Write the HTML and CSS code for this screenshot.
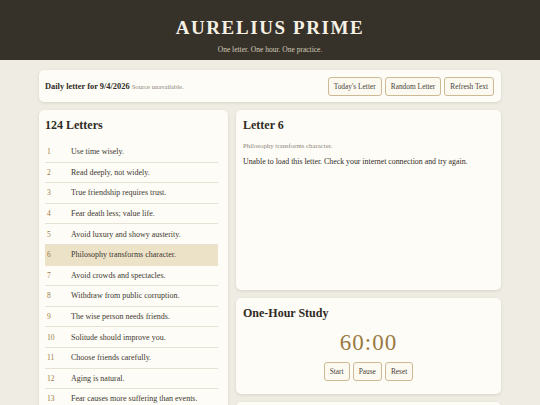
FILE: index.html
```html
<!DOCTYPE html>
<html lang="en">
<head>
<meta charset="utf-8">
<title>Aurelius Prime</title>
<link rel="stylesheet" href="styles.css">
</head>
<body>
<header class="site-header">
  <h1 class="brand">AURELIUS PRIME</h1>
  <p class="tagline">One letter. One hour. One practice.</p>
</header>
<main class="container">
  <section class="card toolbar">
    <div class="daily"><strong>Daily letter for 9/4/2026</strong> <span class="muted">Source unavailable.</span></div>
    <div class="actions">
      <button class="btn">Today's Letter</button>
      <button class="btn">Random Letter</button>
      <button class="btn">Refresh Text</button>
    </div>
  </section>
  <div class="layout">
    <aside class="card letters">
      <h2 class="card-title">124 Letters</h2>
      <ol class="letter-list">
        <li class="row"><span class="num">1</span><span class="summary">Use time wisely.</span></li>
        <li class="row"><span class="num">2</span><span class="summary">Read deeply, not widely.</span></li>
        <li class="row"><span class="num">3</span><span class="summary">True friendship requires trust.</span></li>
        <li class="row"><span class="num">4</span><span class="summary">Fear death less; value life.</span></li>
        <li class="row"><span class="num">5</span><span class="summary">Avoid luxury and showy austerity.</span></li>
        <li class="row active"><span class="num">6</span><span class="summary">Philosophy transforms character.</span></li>
        <li class="row"><span class="num">7</span><span class="summary">Avoid crowds and spectacles.</span></li>
        <li class="row"><span class="num">8</span><span class="summary">Withdraw from public corruption.</span></li>
        <li class="row"><span class="num">9</span><span class="summary">The wise person needs friends.</span></li>
        <li class="row"><span class="num">10</span><span class="summary">Solitude should improve you.</span></li>
        <li class="row"><span class="num">11</span><span class="summary">Choose friends carefully.</span></li>
        <li class="row"><span class="num">12</span><span class="summary">Aging is natural.</span></li>
        <li class="row"><span class="num">13</span><span class="summary">Fear causes more suffering than events.</span></li>
      </ol>
    </aside>
    <div class="main-col">
      <article class="card letter">
        <h2 class="card-title">Letter 6</h2>
        <p class="subtitle">Philosophy transforms character.</p>
        <p class="body">Unable to load this letter. Check your internet connection and try again.</p>
      </article>
      <section class="card study">
        <h2 class="card-title">One-Hour Study</h2>
        <div class="timer">60:00</div>
        <div class="timer-actions">
          <button class="btn">Start</button>
          <button class="btn">Pause</button>
          <button class="btn">Reset</button>
        </div>
      </section>
      <section class="card notes"></section>
    </div>
  </div>
</main>
</body>
</html>
```

FILE: styles.css
```css
* { box-sizing: border-box; }
html, body { margin: 0; padding: 0; }
body {
  background: #efece3;
  font-family: "Liberation Serif", "DejaVu Serif", serif;
  color: #3a362e;
  height: 405px;
  overflow: hidden;
}
.site-header {
  background: #36322a;
  height: 60px;
  text-align: center;
  padding-top: 17px;
}
.brand {
  margin: 0;
  color: #f6f1e4;
  font-size: 19px;
  font-weight: bold;
  letter-spacing: 1.6px;
  line-height: 22px;
}
.tagline {
  margin: 6px 0 0;
  color: #d3cbb9;
  font-size: 7.5px;
  line-height: 9px;
}
.container {
  width: 462px;
  margin: 10px auto 0;
}
.card {
  background: #fefcf7;
  border-radius: 5px;
  box-shadow: 0 1px 3px rgba(60, 50, 30, 0.12);
}
.toolbar {
  height: 32px;
  display: flex;
  align-items: center;
  justify-content: space-between;
  padding: 0 7px 0 6px;
}
.daily { font-size: 8.4px; color: #2f2b24; }
.daily strong { font-weight: bold; }
.muted { color: #8d877a; font-size: 6.6px; }
.actions { display: flex; gap: 3px; }
.btn {
  font-family: inherit;
  font-size: 7.4px;
  color: #4a443a;
  background: #fcf9f1;
  border: 1px solid #cdb994;
  border-radius: 3px;
  height: 19px;
  padding: 0 5px;
  line-height: 17px;
}
.layout {
  display: grid;
  grid-template-columns: 189px 1fr;
  gap: 8px;
  margin-top: 8px;
  align-items: start;
}
.letters { padding: 7px 10px 10px 6px; }
.card-title {
  margin: 0;
  font-size: 12px;
  font-weight: bold;
  color: #2f2b24;
  line-height: 14px;
}
.letters .card-title { padding-top: 1px; }
.letter-list {
  list-style: none;
  margin: 10px 0 0;
  padding: 0;
}
.row {
  display: flex;
  align-items: center;
  height: 20.6px;
  border-bottom: 1px solid #e6e1d4;
  font-size: 8px;
  color: #3d392f;
}
.row.active { background: #ece2c8; border-bottom-color: #ece2c8; }
.num {
  width: 26px;
  padding-left: 2px;
  color: #9c7c45;
  font-size: 7.6px;
}
.main-col {
  display: flex;
  flex-direction: column;
  gap: 8px;
}
.letter {
  height: 180px;
  padding: 8px 7px;
}
.subtitle {
  margin: 10px 0 0;
  font-size: 6.8px;
  line-height: 8px;
  color: #8d877a;
}
.body {
  margin: 7px 0 0;
  font-size: 7.85px;
  line-height: 9px;
  color: #2f2b24;
}
.study {
  height: 96px;
  padding: 8px 7px 0;
}
.timer {
  text-align: center;
  font-size: 23px;
  color: #9a7a44;
  letter-spacing: 1px;
  margin-top: 10px;
  line-height: 26px;
}
.timer-actions {
  display: flex;
  justify-content: center;
  gap: 3px;
  margin-top: 6px;
}
.notes { height: 60px; }
```
